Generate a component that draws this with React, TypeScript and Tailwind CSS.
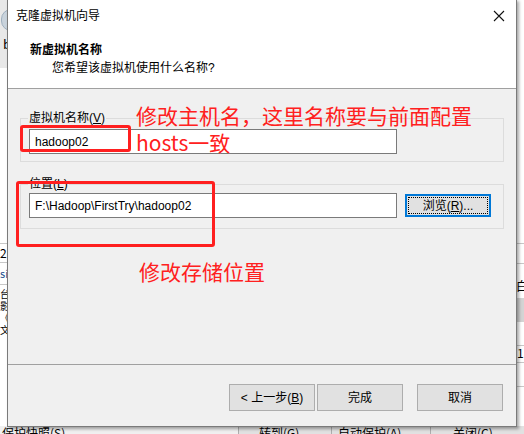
import { FC } from "react";

const ui = "font-['Liberation_Sans','Noto_Sans_CJK_SC',sans-serif]";
const cjk = "font-['Noto_Sans_CJK_SC',sans-serif]";

const CloseIcon: FC = () => (
  <svg width="12" height="12" viewBox="0 0 12 12" className="block">
    <path d="M1 1 L11 11 M11 1 L1 11" stroke="#111" strokeWidth="1.1" fill="none" />
  </svg>
);

const WinButton: FC<{ children: React.ReactNode; focused?: boolean; className?: string }> = ({
  children,
  focused,
  className,
}) => (
  <button
    type="button"
    className={
      (focused
        ? "border-2 border-[#0078d7] p-[1px] "
        : "border border-[#adadad] ") +
      "bg-[#e1e1e1] text-[12px] text-black flex items-stretch " +
      (className ?? "")
    }
  >
    <span
      className={
        (focused ? "border border-dotted border-black " : "") +
        "flex-1 flex items-center justify-center"
      }
    >
      {children}
    </span>
  </button>
);

// the VMware window behind the dialog, only its edges show
const BackApp: FC = () => (
  <div className={"absolute inset-0 bg-white text-[12px] text-black flex flex-col " + cjk}>
    <div className="flex-1 flex justify-between overflow-hidden">
      {/* left edge */}
      <div className="w-[8px] flex flex-col overflow-hidden">
        <div className="h-[68px] bg-[#e8e8e8] flex flex-col pl-[1px] pt-[9px]">
          <div className="w-[20px] h-[22px] shrink-0 rounded-full bg-[#c9d3dc] border border-[#9fb0bf]" />
          <span className="pl-[2px] pt-[5px] leading-[16px] text-[13px]">b</span>
        </div>
        <div className="h-[175px]" />
        <div className="h-[19px] border-t border-[#c8c8c8] leading-[18px]">2</div>
        <div className="h-[22px] border-t border-[#c8c8c8] text-[11px] leading-[20px] text-[#1a4b8c]">sio</div>
        <div className="border-t border-[#c8c8c8] pt-[3px] flex flex-col gap-[1px] text-[10px] leading-[11px]">
          <span>台</span>
          <span>影</span>
          <span>《</span>
          <span>文</span>
        </div>
      </div>
      {/* right edge */}
      <div className="w-[8px] flex flex-col overflow-hidden">
        <div className="h-[243px]" />
        <div className="h-[20px] border-t border-[#c8c8c8]" />
        <div className="h-[35px] border-t border-[#c8c8c8] pt-[15px] leading-[14px]">白</div>
        <div className="h-[24px] bg-[#d4d4d4]" />
        <div className="h-[23px]" />
        <div className="h-[17px] border-t border-[#c8c8c8] leading-[14px] pl-[1px]">1</div>
        <div className="h-[24px] border-t border-[#c8c8c8]" />
        <div className="border-t border-[#c8c8c8]" />
      </div>
    </div>
    {/* bottom edge */}
    <div className="h-[8px] bg-[#f0f0f0] flex items-start overflow-hidden leading-[14px] text-[12px]">
      <span className="pl-[2px] w-[238px]">保护快照(S)</span>
      <span className="w-[93px] h-full border-l border-[#adadad] bg-[#e1e1e1] pl-[20px]">转到(G)</span>
      <span className="w-[99px] h-full border-l border-[#adadad] bg-[#e1e1e1] pl-[6px]">自动保护(A)</span>
      <span className="flex-1 h-full border-l border-[#adadad] bg-[#e1e1e1] pl-[22px]">关闭(C)</span>
    </div>
  </div>
);

const Annotations: FC = () => (
  <>
    <div className="absolute left-[12px] top-[125px] w-[111px] h-[27px] border-[3px] border-[#ff1f1f] rounded-[3px]" />
    <div className="absolute left-[8px] top-[181px] w-[199px] h-[66px] border-[3px] border-[#ff1f1f] rounded-[3px]" />
    <div className={"absolute left-[128px] top-[101px] text-[21px] leading-[28px] text-[#ff2020] whitespace-nowrap " + cjk}>
      <div>修改主机名，这里名称要与前面配置</div>
      <div className="-mt-[1px]">hosts一致</div>
    </div>
    <div className={"absolute left-[131px] top-[257px] text-[21px] leading-[28px] text-[#ff2020] whitespace-nowrap " + cjk}>
      修改存储位置
    </div>
  </>
);

const GroupBox: FC<{ label: React.ReactNode; children: React.ReactNode; className?: string }> = ({
  label,
  children,
  className,
}) => (
  <div className={"mx-[12px] border border-[#dcdcdc] " + (className ?? "")}>
    <div className="-mt-[9px] ml-[7px] w-fit px-[1px] bg-[#f0f0f0] leading-[16px] text-[12px]">
      {label}
    </div>
    {children}
  </div>
);

const Dialog: FC = () => (
  <div
    className={
      "absolute left-[7px] top-[-1px] w-[510px] h-[428px] border border-[#7a7a7a] bg-[#f0f0f0] flex flex-col text-black shadow-[2px_2px_3px_rgba(0,0,0,0.35)] " +
      ui
    }
  >
    {/* title + header */}
    <div className="bg-white h-[89px] border-b border-[#a0a0a0] flex flex-col">
      <div className="h-[31px] flex items-center justify-between pl-[8px] pr-[11px]">
        <span className="text-[12px] leading-[16px]">克隆虚拟机向导</span>
        <CloseIcon />
      </div>
      <div className="pl-[22px] pt-[10px] text-[12px] leading-[18px] font-bold">新虚拟机名称</div>
      <div className="pl-[44px] text-[12px] leading-[18px]">您希望该虚拟机使用什么名称?</div>
    </div>

    {/* body */}
    <div className="flex-1 flex flex-col pt-[29px]">
      <GroupBox
        className="pb-[7px]"
        label={
          <>
            虚拟机名称(<span className="underline">V</span>)
          </>
        }
      >
        <div className="ml-[8px] mt-[3px] w-[368px] h-[25px] bg-white border border-[#7a7a7a] flex items-center pl-[5px] text-[12px]">
          hadoop02
        </div>
      </GroupBox>

      <GroupBox
        className="mt-[22px] pb-[10px]"
        label={
          <>
            位置(<span className="underline">L</span>)
          </>
        }
      >
        <div className="flex items-center mt-[1px]">
          <div className="ml-[8px] w-[368px] h-[25px] bg-white border border-[#7a7a7a] flex items-center pl-[5px] text-[12px]">
            F:\Hadoop\FirstTry\hadoop02
          </div>
          <WinButton focused className="ml-[8px] w-[86px] h-[23px]">
            浏览(<span className="underline">R</span>)...
          </WinButton>
        </div>
      </GroupBox>
    </div>

    {/* footer */}
    <div className="h-[62px] border-t border-[#a0a0a0] flex justify-end items-start pt-[19px] pr-[13px]">
      <WinButton className="w-[86px] h-[27px]">
        &lt; 上一步(<span className="underline">B</span>)
      </WinButton>
      <WinButton className="ml-[2px] w-[86px] h-[27px]">完成</WinButton>
      <WinButton className="ml-[14px] w-[86px] h-[27px]">取消</WinButton>
    </div>

    <Annotations />
  </div>
);

export default function App() {
  return (
    <div className="relative w-[524px] h-[434px] overflow-hidden bg-white">
      <BackApp />
      <Dialog />
    </div>
  );
}
